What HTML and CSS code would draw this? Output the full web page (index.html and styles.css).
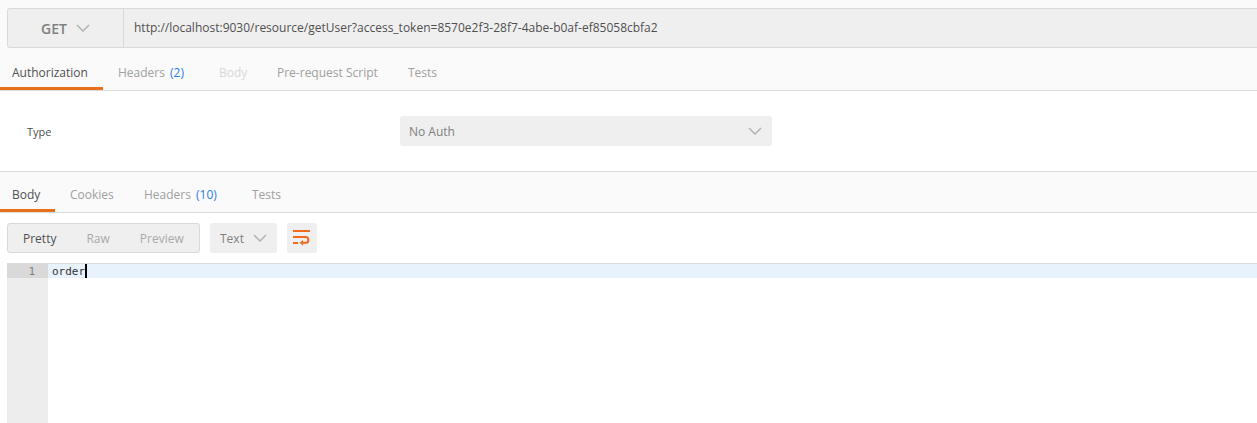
FILE: index.html
```html
<!DOCTYPE html>
<html lang="en">
<head>
<meta charset="utf-8">
<title>GET request</title>
<link rel="stylesheet" href="styles.css">
</head>
<body>
<section class="request">
  <div class="urlbar">
    <div class="method"><span>GET</span>
      <svg class="chev" width="14" height="8" viewBox="0 0 14 8"><path d="M1 1l6 6 6-6" fill="none" stroke="#b5b5b5" stroke-width="1.6"/></svg>
    </div>
    <div class="url">http://localhost:9030/resource/getUser?access_token=8570e2f3-28f7-4abe-b0af-ef85058cbfa2</div>
  </div>
  <nav class="tabs req-tabs">
    <a class="tab active auth">Authorization</a>
    <a class="tab hdr">Headers <b>(2)</b></a>
    <a class="tab faint bd">Body</a>
    <a class="tab pre">Pre-request Script</a>
    <a class="tab tst">Tests</a>
  </nav>
</section>
<section class="auth-pane">
  <div class="type-label">Type</div>
  <div class="select"><span>No Auth</span>
    <svg class="chev" width="14" height="8" viewBox="0 0 14 8"><path d="M1 1l6 6 6-6" fill="none" stroke="#b5b5b5" stroke-width="1.6"/></svg>
  </div>
</section>
<section class="response">
  <nav class="tabs res-tabs">
    <a class="tab active rbody">Body</a>
    <a class="tab ck">Cookies</a>
    <a class="tab rh">Headers <b>(10)</b></a>
    <a class="tab rt">Tests</a>
  </nav>
  <div class="toolbar">
    <div class="modes">
      <span class="mode on">Pretty</span><span class="mode">Raw</span><span class="mode">Preview</span>
    </div>
    <div class="lang"><span>Text</span>
      <svg class="chev" width="14" height="8" viewBox="0 0 14 8"><path d="M1 1l6 6 6-6" fill="none" stroke="#b5b5b5" stroke-width="1.6"/></svg>
    </div>
    <div class="wrap">
      <svg width="18" height="16" viewBox="0 0 18 16"><path d="M0 1h17M0 7h12.500a2.900 2.900 0 0 1 0 5.800H9M0 13h5" fill="none" stroke="#f26b1d" stroke-width="2"/><path d="M10 10v5.500l-3.500-2.700z" fill="#f26b1d"/></svg>
    </div>
  </div>
  <div class="editor">
    <div class="gutter"><div class="num">1</div></div>
    <div class="code"><div class="line"><span>order</span><i class="caret"></i></div></div>
  </div>
</section>
</body>
</html>
```
FILE: styles.css
```css
* { box-sizing: border-box; }
html, body { margin: 0; height: 423px; overflow: hidden; }
body { background: #fff; font: 12px "Open Sans", sans-serif; color: #808080; display: flex; flex-direction: column; }
.request { background: #fafafa; padding-top: 8px; height: 91px; border-bottom: 1px solid #dcdcdc; flex: none; }
.urlbar { margin-left: 7px; height: 40px; display: flex; background: #efefef; border: 1px solid #d9d9d9; border-right: 0; border-radius: 3px 0 0 3px; }
.method { width: 116px; flex: none; border-right: 1px solid #d9d9d9; display: flex; align-items: center; padding-left: 33px; gap: 9px; font-size: 14px; font-weight: 600; color: #808080; }
.url { padding-left: 10px; line-height: 37px; color: #505050; font-size: 12px; }
.tabs { display: flex; }
.req-tabs { height: 42px; }
.res-tabs { height: 41px; border-bottom: 1px solid #dcdcdc; background: #fafafa; flex: none; }
.tab { display: block; padding: 0 0 0 12px; color: #a0a0a0; white-space: nowrap; }
.req-tabs .tab { line-height: 50px; }
.res-tabs .tab { line-height: 46px; }
.tab b { font-weight: 400; color: #2a7ee8; margin-left: 2px; }
.tab.active { color: #505050; border-bottom: 3px solid #e8701a; }
.tab.faint { color: #d8d8d8; }
.auth { width: 103px; }
.hdr { width: 101px; padding-left: 15px; }
.bd { width: 58px; padding-left: 15px; }
.pre { width: 131px; padding-left: 15px; }
.tst { padding-left: 15px; }
.rbody { width: 55px; }
.ck { width: 74px; padding-left: 15px; }
.rh { width: 108px; padding-left: 15px; }
.rt { padding-left: 15px; }
.req-tabs .tab.active { height: 42px; }
.res-tabs .tab.active { height: 40px; }
.auth-pane { height: 81px; flex: none; background: #fff; border-bottom: 1px solid #dcdcdc; display: flex; align-items: flex-start; padding-top: 25px; }
.type-label { width: 400px; padding: 1px 0 0 27px; line-height: 30px; font-size: 11px; color: #505050; flex: none; }
.select { width: 372px; height: 30px; background: #efefef; border-radius: 3px; display: flex; align-items: center; justify-content: space-between; padding: 0 10px 0 9px; color: #808080; }
.response { flex: 1; display: flex; flex-direction: column; min-height: 0; }
.toolbar { height: 50px; flex: none; display: flex; align-items: flex-start; padding: 10px 0 0 7px; }
.modes { width: 193px; height: 30px; background: #efefef; border: 1px solid #d9d9d9; border-radius: 3px; display: flex; align-items: center; padding-left: 15px; gap: 30px; margin-right: 10px; }
.mode { color: #aaa; }
.mode.on { color: #505050; }
.lang { width: 67px; height: 30px; background: #efefef; border-radius: 3px; display: flex; align-items: center; gap: 9px; padding-left: 10px; color: #808080; margin-right: 10px; }
.wrap { width: 30px; height: 30px; background: #efefef; border-radius: 3px; display: flex; align-items: center; justify-content: center; }
.editor { flex: 1; margin-left: 7px; display: flex; border-top: 1px solid #dcdcdc; min-height: 0; font: 11px/15px "DejaVu Sans Mono", monospace; }
.gutter { width: 41px; background: #ededed; flex: none; }
.num { height: 14px; background: #d9d9d9; color: #808080; text-align: right; padding-right: 13px; }
.code { flex: 1; }
.line { height: 14px; background: #e8f2fd; color: #333; padding-left: 4px; display: flex; }
.caret { width: 2px; height: 14px; background: #000; }
```
